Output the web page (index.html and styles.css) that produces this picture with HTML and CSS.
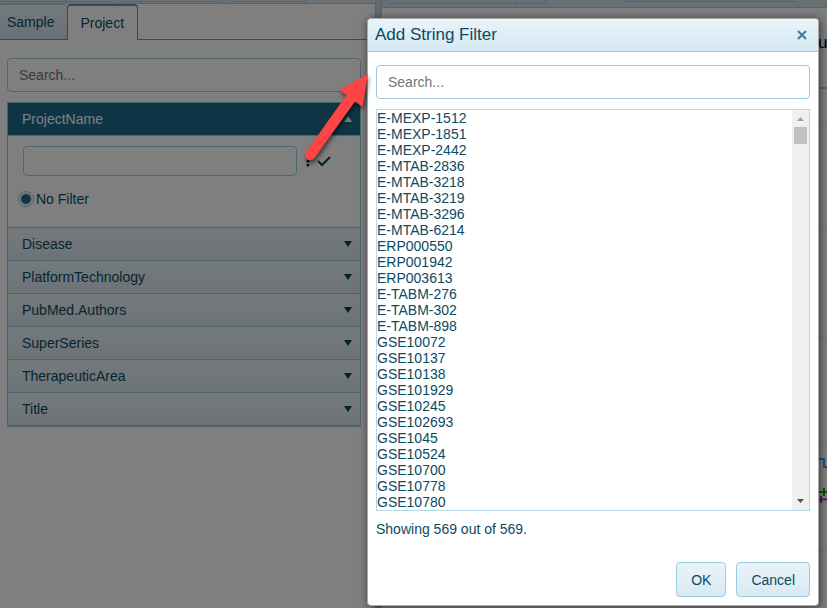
FILE: index.html
```html
<!DOCTYPE html>
<html lang="en">
<head>
<meta charset="utf-8">
<title>Add String Filter</title>
<link rel="stylesheet" href="styles.css">
</head>
<body>
<div class="app">
  <aside class="side">
    <div class="toolbar">
      <span class="tool tool-a"></span><span class="tool tool-b"></span><span class="tool tool-c"></span>
    </div>
    <nav class="tabs">
      <button class="tab" type="button">Sample</button>
      <button class="tab active" type="button">Project</button>
    </nav>
    <div class="side-body">
      <input class="search" type="text" placeholder="Search..." aria-label="Search filters">
      <div class="accordion">
        <button class="head open" type="button">ProjectName<svg class="tri" viewBox="0 0 8 6"><path d="M4 0L8 6H0Z"/></svg></button>
        <div class="panel">
          <div class="row">
            <input class="value" type="text" aria-label="Project name">
            <svg class="marks" viewBox="0 0 24 14"><circle cx="2" cy="3" r="1.6"/><circle cx="2" cy="7" r="1.6"/><circle cx="2" cy="11" r="1.6"/><path class="check" d="M12 7L16 11L24 3"/></svg>
          </div>
          <label class="choice"><input type="radio" name="filter" checked>No Filter</label>
        </div>
        <button class="head" type="button">Disease<svg class="tri" viewBox="0 0 8 6"><path d="M0 0H8L4 6Z"/></svg></button>
        <button class="head" type="button">PlatformTechnology<svg class="tri" viewBox="0 0 8 6"><path d="M0 0H8L4 6Z"/></svg></button>
        <button class="head" type="button">PubMed.Authors<svg class="tri" viewBox="0 0 8 6"><path d="M0 0H8L4 6Z"/></svg></button>
        <button class="head" type="button">SuperSeries<svg class="tri" viewBox="0 0 8 6"><path d="M0 0H8L4 6Z"/></svg></button>
        <button class="head" type="button">TherapeuticArea<svg class="tri" viewBox="0 0 8 6"><path d="M0 0H8L4 6Z"/></svg></button>
        <button class="head" type="button">Title<svg class="tri" viewBox="0 0 8 6"><path d="M0 0H8L4 6Z"/></svg></button>
      </div>
    </div>
  </aside>
  <div class="splitter"></div>
  <main class="view">
    <div class="view-bar"><span class="tool tool-d"></span><span class="tool tool-e"></span><span class="tool tool-f"></span></div>
    <div class="chart">
      <svg class="plot" viewBox="0 -16 20 600" width="20" height="600">
        <path class="grid strong" d="M0 64H20"/>
        <path class="grid" d="M0 97.500H20M0 204.500H20M0 312.500H20M0 419.500H20M0 527.500H20"/>
        <text x="9" y="24">u</text>
        <path class="blue" d="M10 435H15V443H20M19 439V446"/>
        <path class="green" d="M10 468H20M15 464V472M19 464V472"/>
        <path class="purple" d="M10 475.500H20M12 472V479"/>
      </svg>
    </div>
  </main>
</div>
<div class="shade"></div>
<section class="dialog" role="dialog" aria-labelledby="dialog-title">
  <header class="dialog-head">
    <h1 id="dialog-title">Add String Filter</h1>
    <button class="close" type="button" aria-label="Close"><svg viewBox="0 0 10 10"><path d="M1 1L9 9M9 1L1 9"/></svg></button>
  </header>
  <div class="dialog-body">
    <input class="search" type="text" placeholder="Search..." aria-label="Search values">
    <div class="listbox">
      <select size="25" multiple aria-label="Values">
        <option>E-MEXP-1512</option><option>E-MEXP-1851</option><option>E-MEXP-2442</option><option>E-MTAB-2836</option><option>E-MTAB-3218</option><option>E-MTAB-3219</option><option>E-MTAB-3296</option><option>E-MTAB-6214</option><option>ERP000550</option><option>ERP001942</option><option>ERP003613</option><option>E-TABM-276</option><option>E-TABM-302</option><option>E-TABM-898</option><option>GSE10072</option><option>GSE10137</option><option>GSE10138</option><option>GSE101929</option><option>GSE10245</option><option>GSE102693</option><option>GSE1045</option><option>GSE10524</option><option>GSE10700</option><option>GSE10778</option><option>GSE10780</option>
      </select>
      <div class="scroll">
        <svg class="arrow up" viewBox="0 0 7 4"><path d="M3.500 0L7 4H0Z"/></svg>
        <span class="thumb"></span>
        <svg class="arrow down" viewBox="0 0 7 4"><path d="M0 0H7L3.500 4Z"/></svg>
      </div>
    </div>
    <p class="count">Showing 569 out of 569.</p>
    <div class="actions">
      <button class="btn" type="button">OK</button>
      <button class="btn" type="button">Cancel</button>
    </div>
  </div>
</section>
<svg class="pointer" viewBox="0 0 80 104" width="80" height="104"><path d="M68 4L62.500 37L55 31.500L14.500 88A5.200 5.200 0 0 1 6 82L46.500 25L39 20Z"/></svg>
</body>
</html>
```

FILE: styles.css
```css
* { box-sizing: border-box; }
body {
  margin: 0;
  height: 100vh;
  overflow: hidden;
  position: relative;
  font: 14px/16px "Liberation Sans", Arial, sans-serif;
  color: #0b4a63;
  background: #fff;
}
button, input, select { font: inherit; color: inherit; margin: 0; }
input::placeholder { color: #757575; opacity: 1; }

.app { display: flex; height: 100%; }
.side { flex: 0 0 375px; }
.splitter { flex: 0 0 7px; background: #c4d6e2; border: solid #aac8d8; border-width: 0 1px; }
.view { flex: 1; display: flex; flex-direction: column; min-width: 0; }

.toolbar, .view-bar { display: flex; gap: 7px; background: #d5e5ee; border-bottom: 1px solid #a4c9d9; }
.toolbar { height: 4px; }
.view-bar { height: 8px; padding-left: 4px; gap: 0; background: #d2e0e9; }
.tool { height: 2px; border: 1px solid #a2cbdd; border-top: 0; border-radius: 0 0 4px 4px; }
.tool-a { width: 114px; }
.tool-b { width: 102px; }
.tool-c { width: 77px; }
.tool-d, .tool-e { height: 4px; }
.tool-d { width: 131px; border-radius: 0 0 0 4px; }
.tool-e { width: 29px; border-left: 0; border-radius: 0 0 4px 0; }
.tool-f { width: 173px; margin-left: 77px; }

.tabs { display: flex; height: 36px; border-bottom: 1px solid #5c9dbb; }
.tab {
  padding: 0 13px 0 12px;
  border: 1px solid #75aec9;
  border-bottom: 0;
  border-radius: 4px 4px 0 0;
  background: linear-gradient(#e8f3f8, #cfe2ed);
}
.tab:first-child { padding-left: 7px; border-left: 0; border-right: 0; border-top-color: #a7ccdc; border-top-left-radius: 0; }
.tab.active { height: 36px; background: #fff; border-color: #5c9dbb; border-top-width: 2px; }

.side-body { padding: 18px 14px 0 7px; }
.search {
  display: block;
  width: 100%;
  height: 34px;
  padding: 0 11px;
  border: 1px solid #9bcbe0;
  border-radius: 4px;
  background: #fff;
}
.accordion { margin-top: 10px; border: 1px solid #9bc7db; border-bottom-width: 2px; }
.head {
  display: flex;
  align-items: center;
  justify-content: space-between;
  width: 100%;
  height: 33px;
  padding: 0 8px 0 14px;
  border: 0;
  border-top: 1px solid #9bc7db;
  background: linear-gradient(#eaf4f8, #d8e6ee);
}
.head.open { border-top: 0; border-bottom: 1px solid #9bc7db; background: #1c6a8c; color: #fff; }
.tri { width: 8px; height: 6px; fill: #06415a; }
.open .tri { fill: #fff; }
.panel { padding: 10px 15px 20px; height: 91px; }
.row { display: flex; align-items: center; gap: 9px; }
.value { flex: 0 0 274px; height: 30px; border: 1px solid #9bcbe0; border-radius: 4px; background: #fff; }
.marks { width: 24px; height: 14px; overflow: visible; fill: #06304a; }
.check { fill: none; stroke: #06415a; stroke-width: 2; }
.choice { display: flex; align-items: center; gap: 2px; margin: 15px 0 0 -5px; }
.choice input {
  appearance: none;
  width: 16px;
  height: 16px;
  border: 1px solid #9bc7db;
  border-radius: 50%;
  background: radial-gradient(circle, #1c6a8c 4px, #fff 6px);
}

.chart { flex: 1; display: flex; justify-content: flex-end; margin-right: -2px; overflow: hidden; }
.plot { flex: none; font-size: 17px; }
.grid { stroke: #e4e4e4; fill: none; }
.strong { stroke: #ccc; stroke-width: 2; }
.plot text { fill: #000; }
.blue, .green, .purple { fill: none; stroke-width: 2; }
.blue { stroke: #4a9fe8; }
.green { stroke: #18a018; }
.purple { stroke: #a040b0; }

.shade { position: absolute; inset: 0; background: rgba(0, 0, 0, .5); }
.dialog {
  position: absolute;
  top: 18px;
  right: 8px;
  width: 452px;
  border: 1px solid #aaa;
  border-radius: 4px;
  background: #fff;
  box-shadow: 1px 1px 8px rgba(0, 0, 0, .6);
}
.dialog-head {
  display: flex;
  align-items: center;
  justify-content: space-between;
  height: 33px;
  padding: 0 11px 0 7px;
  border-bottom: 1px solid #9bcbe0;
  border-radius: 3px 3px 0 0;
  background: linear-gradient(#e9f4f9, #d5e8f2);
}
h1 { margin: 0; font-size: 17px; line-height: 20px; font-weight: normal; }
.close { display: flex; padding: 0; border: 0; background: none; }
.close svg { width: 10px; height: 10px; fill: none; stroke: #3d7b94; stroke-width: 2; }
.dialog-body { padding: 13px 8px 8px; }
.listbox { display: flex; margin-top: 10px; border: 1px solid #b5d9e6; }
select {
  flex: 1;
  height: 400px;
  padding: 0;
  border: 0;
  border-radius: 0;
  outline: 0;
  background: #fff;
  scrollbar-width: none;
}
option { height: 16px; min-height: 16px; padding: 0; line-height: 16px; }
.scroll { display: flex; flex-direction: column; align-items: center; width: 17px; padding: 7px 0; background: #f0f0f0; }
.arrow { width: 7px; height: 4px; }
.up { fill: #a0a0a0; }
.down { margin-top: auto; fill: #505050; }
.thumb { width: 13px; height: 17px; margin-top: 6px; background: #c1c1c1; }
.count { margin: 10px 0 25px; }
.actions { display: flex; justify-content: flex-end; gap: 10px; }
.btn {
  height: 35px;
  padding: 0 14px;
  border: 1px solid #9bcbe0;
  border-radius: 4px;
  background: linear-gradient(#eaf4f9, #d8e9f2);
}
.pointer { position: absolute; left: 300px; top: 70px; fill: #ff4444; filter: drop-shadow(1px 3px 2px rgba(0, 0, 0, .55)); }
```
